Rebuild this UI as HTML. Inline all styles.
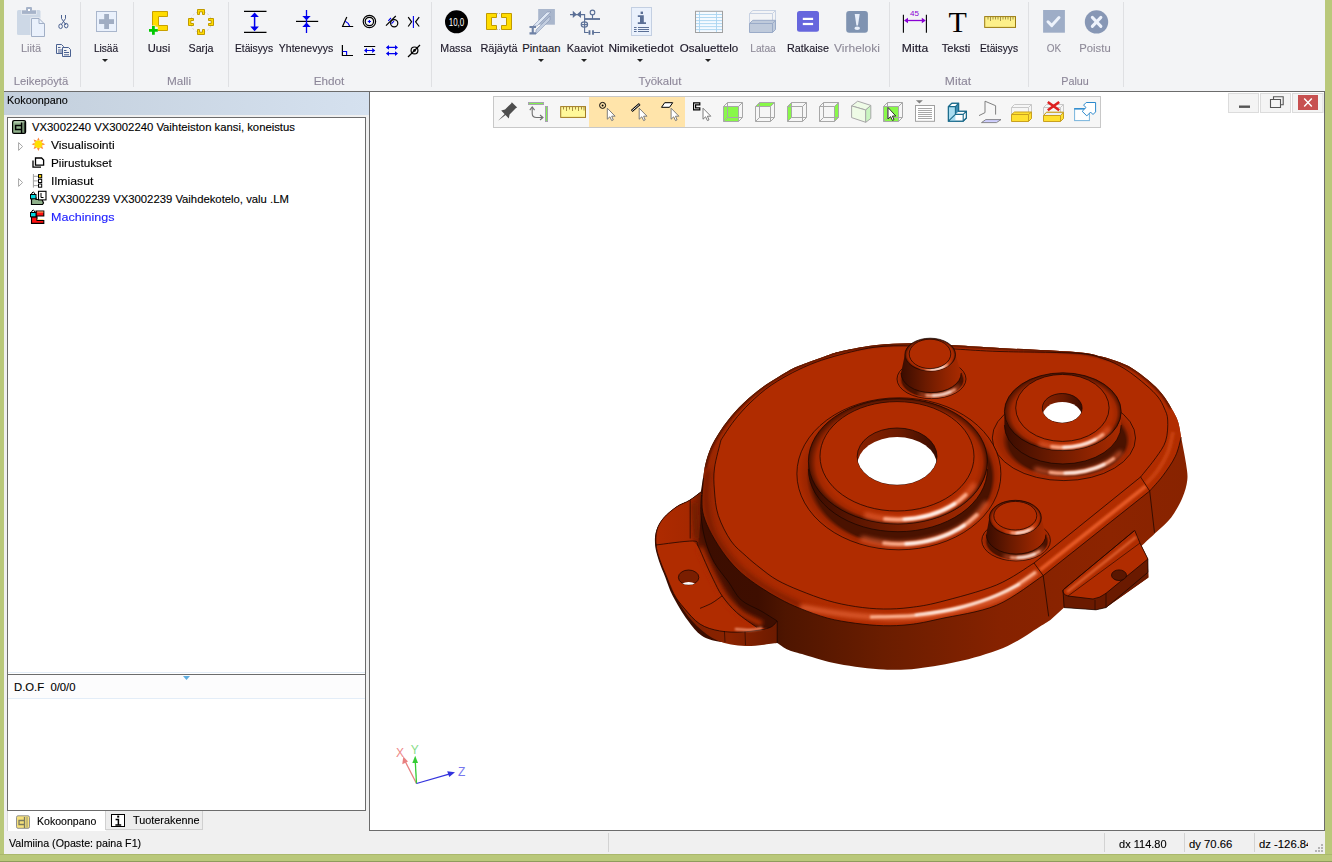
<!DOCTYPE html>
<html><head><meta charset="utf-8">
<style>
*{margin:0;padding:0;box-sizing:border-box}
html,body{width:1332px;height:862px;overflow:hidden;background:#b9c87a;font-family:"Liberation Sans",sans-serif;position:relative}
.a{position:absolute}
.lbl{position:absolute;width:100px;text-align:center;font-size:11.3px;line-height:14px;color:#1c1828;white-space:nowrap;-webkit-text-stroke:0.15px #1c1828}
.dis{color:#8e8a98;-webkit-text-stroke:0.1px #8e8a98}
.grp{position:absolute;width:100px;text-align:center;font-size:11.3px;line-height:14px;color:#8c8698;white-space:nowrap;-webkit-text-stroke:0.1px #8c8698}
.sep{position:absolute;top:2px;width:1px;height:85px;background:#dfe0e3}
.dd{position:absolute;width:0;height:0;border-left:3px solid transparent;border-right:3px solid transparent;border-top:3px solid #222}
.tr{position:absolute;font-size:11.3px;line-height:14px;color:#000;white-space:nowrap;-webkit-text-stroke:0.12px currentColor}
svg{position:absolute;overflow:visible}
</style></head><body>
<!-- ribbon -->
<div class="a" style="left:4px;top:0;width:1321px;height:91px;background:#f3f4f6"></div>
<div class="a" style="left:4px;top:91px;width:1321px;height:1px;background:#6c6c6c"></div>
<div class="sep" style="left:80px"></div>
<div class="sep" style="left:133px"></div>
<div class="sep" style="left:228px"></div>
<div class="sep" style="left:431px"></div>
<div class="sep" style="left:889px"></div>
<div class="sep" style="left:1028px"></div>
<div class="sep" style="left:1123px"></div>

<!-- labels -->
<div class="lbl dis" style="left:-19.5px;top:41px;transform:scaleX(0.974)">Liitä</div>
<div class="lbl" style="left:55.6px;top:41px;transform:scaleX(0.896)">Lisää</div>
<div class="dd" style="left:102px;top:59px"></div>
<div class="lbl" style="left:108.8px;top:41px;transform:scaleX(0.991)">Uusi</div>
<div class="lbl" style="left:150.5px;top:41px;transform:scaleX(0.944)">Sarja</div>
<div class="lbl" style="left:204.4px;top:41px;transform:scaleX(0.905)">Etäisyys</div>
<div class="lbl" style="left:256.3px;top:41px;transform:scaleX(0.929)">Yhtenevyys</div>
<div class="lbl" style="left:406px;top:41px;transform:scaleX(0.940)">Massa</div>
<div class="lbl" style="left:448.5px;top:41px;transform:scaleX(0.968)">Räjäytä</div>
<div class="lbl" style="left:491.5px;top:41px;transform:scaleX(1.000)">Pintaan</div>
<div class="dd" style="left:538px;top:59px"></div>
<div class="lbl" style="left:534.5px;top:41px;transform:scaleX(0.968)">Kaaviot</div>
<div class="dd" style="left:581px;top:59px"></div>
<div class="lbl" style="left:591.2px;top:41px;transform:scaleX(1.049)">Nimiketiedot</div>
<div class="dd" style="left:637px;top:59px"></div>
<div class="lbl" style="left:659.1px;top:41px;transform:scaleX(1.024)">Osaluettelo</div>
<div class="dd" style="left:705px;top:59px"></div>
<div class="lbl dis" style="left:712.7px;top:41px;transform:scaleX(0.906)">Lataa</div>
<div class="lbl" style="left:757.5px;top:41px;transform:scaleX(0.955)">Ratkaise</div>
<div class="lbl dis" style="left:806.7px;top:41px;transform:scaleX(1.064)">Virheloki</div>
<div class="lbl" style="left:864.7px;top:41px;transform:scaleX(1.074)">Mitta</div>
<div class="lbl" style="left:906.2px;top:41px;transform:scaleX(0.986)">Teksti</div>
<div class="lbl" style="left:949.3px;top:41px;transform:scaleX(0.905)">Etäisyys</div>
<div class="lbl dis" style="left:1004px;top:41px;transform:scaleX(0.883)">OK</div>
<div class="lbl dis" style="left:1045.3px;top:41px;transform:scaleX(0.997)">Poistu</div>

<div class="grp" style="left:-8.7px;top:74px;transform:scaleX(0.999)">Leikepöytä</div>
<div class="grp" style="left:129.4px;top:74px;transform:scaleX(1.042)">Malli</div>
<div class="grp" style="left:278.7px;top:74px;transform:scaleX(1.037)">Ehdot</div>
<div class="grp" style="left:609.7px;top:74px;transform:scaleX(1.017)">Työkalut</div>
<div class="grp" style="left:907.9px;top:74px;transform:scaleX(1.074)">Mitat</div>
<div class="grp" style="left:1024.7px;top:74px;transform:scaleX(0.955)">Paluu</div>

<!-- ICONS -->
<div id="icons"><svg style="left:0;top:0" width="1332" height="92" viewBox="0 0 1332 92">
<!-- Liita clipboard -->
<rect x="17" y="10" width="23.5" height="25" rx="1.5" fill="#cdd8e6"/>
<rect x="21.5" y="9.5" width="15" height="5" fill="#f3f4f6"/>
<rect x="22" y="10.3" width="14" height="3.6" fill="#a6b3c9"/>
<rect x="26" y="7" width="6" height="4" rx="1" fill="#a6b3c9"/>
<rect x="28" y="9" width="2" height="2" fill="#fff"/>
<path d="M30.5 17.5 H39.5 L45.5 23.5 V37.5 H30.5 Z" fill="#f3f4f6"/>
<path d="M31.5 18.5 H39 L44.5 24 V36.5 H31.5 Z" fill="#eaf1fc" stroke="#a1afc6" stroke-width="1"/>
<path d="M39 18.5 V23.5 H44.5" fill="none" stroke="#a1afc6" stroke-width="1"/>
<!-- scissors -->
<g fill="none" stroke="#4a6191" stroke-width="1">
<path d="M61.5 15 V18.5 L66 25 M65.5 15 V18.5 L61 25"/>
<ellipse cx="60.6" cy="26.3" rx="1.8" ry="2.3"/>
<ellipse cx="66.2" cy="25.6" rx="1.8" ry="2.3"/>
</g>
<!-- copy -->
<g fill="#f3f4f6" stroke="#4a6191" stroke-width="1">
<path d="M56.5 44.5 H61.5 L63.5 46.5 V53.5 H56.5 Z"/>
<path d="M62.5 47.5 H68.5 L70.5 49.5 V56.5 H62.5 Z"/>
<path d="M58 47.5 H60.5 M58 50 H62 M58 52 H62 M64 50.5 H66.5 M64 52.5 H69 M64 54.8 H69"/>
</g>
<!-- Lisaa -->
<rect x="96.5" y="11.5" width="20" height="20" fill="#eaf1fc" stroke="#a9b6cc" stroke-width="1"/>
<rect x="99" y="19.2" width="15" height="4.8" fill="#a0adc3"/>
<rect x="104.2" y="14" width="4.8" height="15" fill="#a0adc3"/>
<!-- Uusi -->
<path d="M152.5 11.5 H167.5 V16.5 H158.5 V25.5 H167.5 V30.5 H152.5 Z" fill="#ffdc00" stroke="#c8a000" stroke-width="1"/>
<path d="M148.5 28.9 H157.8 M153.2 25.5 V34.8" stroke="#f3f4f6" stroke-width="4.5"/>
<path d="M149 30.4 H157.8 M153.4 26 V34.8" stroke="#00c800" stroke-width="2.8"/>
<!-- Sarja -->
<circle cx="201" cy="22" r="10.5" fill="none" stroke="#c8c8c8" stroke-width="0.8" stroke-dasharray="2 2"/>
<g fill="#ffdc00" stroke="#c09a00" stroke-width="1">
<path d="M197.5 14.5 V9.5 H204.5 V14.5 H202.5 V11.8 H199.5 V14.5 Z"/>
<path d="M197.5 29.5 V34.5 H204.5 V29.5 H202.5 V32.2 H199.5 V29.5 Z"/>
<path d="M193.5 18.5 H188.5 V25.5 H193.5 V23.5 H190.8 V20.5 H193.5 Z"/>
<path d="M208.5 18.5 H213.5 V25.5 H208.5 V23.5 H211.2 V20.5 H208.5 Z"/>
</g>
<!-- Etaisyys -->
<path d="M244 11.3 H266.5 M244 32.3 H266.5" stroke="#000" stroke-width="1.2"/>
<path d="M254.6 14 V30" stroke="#0000ee" stroke-width="1.5"/>
<path d="M250.3 17 L254.6 12.4 L258.9 17 Z M250.3 26.5 L254.6 31.2 L258.9 26.5 Z" fill="#0000ee"/>
<!-- Yhtenevyys -->
<path d="M296 21.4 H318.2" stroke="#000" stroke-width="1.2"/>
<path d="M306.5 10 V33" stroke="#0000ee" stroke-width="1.3"/>
<path d="M302.3 16 L306.5 20.2 L310.7 16 Z M302.3 27 L306.5 22.6 L310.7 27 Z" fill="#0000ee"/>
<!-- small icons row1 -->
<g fill="none" stroke="#000" stroke-width="1.2">
<path d="M341.9 26.5 H353.2 M342.5 26.5 L346.8 17"/>
<circle cx="369.4" cy="21.5" r="6.2"/>
<circle cx="369.4" cy="21.5" r="4.2"/>
<circle cx="394.2" cy="23.3" r="3.6"/>
<path d="M386 25.6 L395.8 16"/>
<path d="M408.2 17.2 L411.6 21.8 L408.2 26.5 M419.2 17.2 L415.6 21.8 L419.2 26.5"/>
</g>
<g fill="none" stroke="#0000ee" stroke-width="1.1">
<path d="M345.2 21.2 Q348.6 22.8 349.6 26"/>
<path d="M388.3 20.8 L391 18 M391.5 23.7 L394 21.2"/>
<path d="M413.4 16 V28"/>
<path d="M367.8 21.5 H371 M369.4 19.9 V23.1"/>
</g>
<!-- row2 -->
<g fill="none" stroke="#000" stroke-width="1.2">
<path d="M342.4 45 V55.5 H353"/>
<path d="M364 46.5 H375.2 M364 54.5 H375.2"/>
<path d="M408 57 L420 45"/>
<circle cx="414.5" cy="50.4" r="3.4"/>
</g>
<circle cx="414.5" cy="50.4" r="1.3" fill="#000"/>
<g fill="none" stroke="#0000ee" stroke-width="1.1">
<path d="M342.6 51.5 H346.6 V55"/>
<path d="M365 50.5 H374.5 M387 47.4 H397 M387 53.6 H397"/>
</g>
<g fill="#0000ee">
<path d="M364 50.5 L367 48 V53 Z M375.2 50.5 L372.2 48 V53 Z"/>
<path d="M385.9 47.4 L389 45 V49.8 Z M398 47.4 L395 45 V49.8 Z M385.9 53.6 L389 51.2 V56 Z M398 53.6 L395 51.2 V56 Z"/>
</g>
<!-- Massa -->
<circle cx="456.5" cy="21.8" r="11.5" fill="#000"/>
<text x="456.5" y="26" text-anchor="middle" font-family="Liberation Sans" font-size="11" fill="#fff" textLength="15.5" lengthAdjust="spacingAndGlyphs">10,0</text>
<!-- Rajayta -->
<g fill="#ffdc00" stroke="#c09a00" stroke-width="1">
<path d="M486.5 13.5 H496.5 V17.5 H491.5 V25.5 H496.5 V29.5 H486.5 Z"/>
<path d="M511.5 13.5 H501.5 V17.5 H506.5 V25.5 H501.5 V29.5 H511.5 Z"/>
</g>
<path d="M497 13.5 H501 M497 29.5 H501" stroke="#b0b0b0" stroke-width="0.8" stroke-dasharray="1 1"/>
<!-- Pintaan -->
<rect x="538.2" y="9" width="16.7" height="15.7" fill="#a9b6cc"/>
<path d="M533 26 L547 12 L551 12 L537 26 Z" fill="#dde6f3" stroke="#8796b4" stroke-width="0.6"/>
<path d="M536 30 L550 16 V20 L536 34 Z" fill="#c3cee0" stroke="#8796b4" stroke-width="0.6"/>
<path d="M529.5 26 H536 V28 H533.8 V32.3 H536 V34.6 H529.5 V32.3 H531.7 V28 H529.5 Z" fill="#6f82a6"/>
<!-- Kaaviot -->
<g fill="none" stroke="#5a6f96" stroke-width="1.1">
<path d="M570 14.6 H584.6 V32.5 H588.6 M593.4 32.5 H600"/>
<circle cx="592.5" cy="12.4" r="2.3"/>
<path d="M592.5 14.7 V19"/>
<ellipse cx="584.4" cy="24.6" rx="3.2" ry="2.7"/>
<path d="M581.5 24.6 H587.3"/>
</g>
<path d="M584.6 19 H600" stroke="#5a6f96" stroke-width="1.8"/>
<path d="M589.5 30.2 V34.8 M593 30.2 V34.8" stroke="#5a6f96" stroke-width="1.8"/>
<path d="M572.8 10.8 L576.8 14.6 L572.8 18 Z M581 10.8 L576.8 14.6 L581 18 Z" fill="#5a6f96"/>
<!-- Nimiketiedot -->
<rect x="631.5" y="7.5" width="20" height="28" fill="#eaf1fc" stroke="#c3cfe2" stroke-width="1"/>
<g fill="#5a6f96">
<rect x="640.6" y="11.6" width="2.4" height="2.4"/>
<path d="M637.8 15.3 H643.8 V22.2 H646 V24 H637.8 V22.2 H640 V17 H637.8 Z"/>
<rect x="634" y="27" width="2.6" height="1" /><rect x="638" y="27" width="11" height="1"/>
<rect x="634" y="29" width="2.6" height="1" /><rect x="638" y="29" width="11" height="1"/>
<rect x="634" y="31" width="2.6" height="1" /><rect x="638" y="31" width="11" height="1"/>
</g>
<!-- Osaluettelo -->
<rect x="695.5" y="11.3" width="27" height="21.2" fill="#f5faff" stroke="#a0a0a0" stroke-width="1"/>
<g stroke="#a8d4f0" stroke-width="0.9">
<path d="M696 14.5 H722 M696 17.5 H722 M696 20.6 H722 M696 23.6 H722 M696 26.6 H722 M696 29.6 H722"/>
<path d="M699.5 12 V32 M716.5 12 V32"/>
</g>
<!-- Lataa -->
<g fill="none" stroke="#c8d2e3" stroke-width="1">
<path d="M749.5 23.5 V13.5 L752.8 10.5 H775.5 V23 M749.5 13.5 H772.5 V23 M772.5 13.5 L775.5 10.5"/>
</g>
<path d="M749.5 23.5 L752.8 20.3 H775.5 V29.5 L772.5 32.5 H749.5 Z" fill="#bfcadb" stroke="#9aabc8" stroke-width="1"/>
<path d="M749.5 23.5 H772.5 V32.5 M772.5 23.5 L775.5 20.3" fill="none" stroke="#9aabc8" stroke-width="1"/>
<!-- Ratkaise -->
<rect x="797" y="11" width="22" height="20.8" rx="2.5" fill="#6666dd"/>
<rect x="802.8" y="17.8" width="10.3" height="2.2" fill="#fff"/>
<rect x="802.8" y="22.9" width="10.3" height="2.2" fill="#fff"/>
<!-- Virheloki -->
<rect x="846.2" y="11" width="21.7" height="21.8" rx="3" fill="#7f93b1"/>
<path d="M854.7 14 H859.7 L858 25.5 H856.4 Z" fill="#e8effa"/>
<ellipse cx="857.2" cy="28.3" rx="2.8" ry="1.7" fill="#e8effa"/>
<!-- Mitta -->
<path d="M903.4 14.8 V32.8 M926.4 14.8 V32.8" stroke="#000" stroke-width="1.1"/>
<path d="M906 20.5 H924" stroke="#8a00d4" stroke-width="1.3"/>
<path d="M904 20.5 L908 17.8 V23.2 Z M925.8 20.5 L921.8 17.8 V23.2 Z" fill="#8a00d4"/>
<text x="914.5" y="15.9" text-anchor="middle" font-family="Liberation Sans" font-size="8" fill="#8a00d4">45</text>
<!-- Teksti -->
<text x="957.6" y="32.4" text-anchor="middle" font-family="Liberation Serif" font-size="30" fill="#000">T</text>
<!-- ruler -->
<rect x="984.7" y="16.6" width="30.8" height="10.8" fill="#fdf08a" stroke="#9a7a10" stroke-width="1"/>
<path d="M988 17 V19.5 M990.5 17 V21 M993 17 V19.5 M995.5 17 V19.5 M998 17 V19.5 M1000.5 17 V21 M1003 17 V19.5 M1005.5 17 V19.5 M1008 17 V19.5 M1010.5 17 V21 M1013 17 V19.5" stroke="#6a5a20" stroke-width="0.6"/>
<!-- OK -->
<rect x="1043.1" y="10" width="21.8" height="22.7" fill="#9eadc7"/>
<path d="M1048 21.8 L1051.8 25.6 L1059 17.5" fill="none" stroke="#eef3fc" stroke-width="3" stroke-linecap="round" stroke-linejoin="round"/>
<!-- Poistu -->
<circle cx="1096.5" cy="21.9" r="11.7" fill="#8797b5"/>
<path d="M1092.3 17.4 L1100.9 26.4 M1100.9 17.4 L1092.3 26.4" stroke="#eef3fc" stroke-width="3" stroke-linecap="round"/>
</svg>
</div>

<!-- left panel -->
<div class="a" style="left:4px;top:92px;width:365px;height:739px;background:#f0f0f0"></div>
<div class="a" style="left:4px;top:92px;width:365px;height:23px;background:linear-gradient(90deg,#c3cfdc,#d5e1ef)"></div>
<div class="tr" style="left:7px;top:93px;font-size:11.5px;transform:scaleX(0.94);transform-origin:0 0">Kokoonpano</div>
<div class="a" style="left:7px;top:117px;width:359px;height:694px;background:#fff;border:1px solid #6c6c6c"></div>
<div class="a" style="left:8px;top:672px;width:357px;height:1px;background:#e3edf8"></div>
<div class="a" style="left:8px;top:674px;width:357px;height:1px;background:#6c6c6c"></div>
<div class="a" style="left:8px;top:675px;width:357px;height:23px;background:#fcfcfd"></div>
<div class="a" style="left:8px;top:698px;width:357px;height:1px;background:#e3edf8"></div>
<div class="tr" style="left:14px;top:680px">D.O.F&nbsp; 0/0/0</div>

<div class="tr" style="left:32px;top:120px">VX3002240 VX3002240 Vaihteiston kansi, koneistus</div>
<div class="tr" style="left:51px;top:138px;transform:scaleX(1.07);transform-origin:0 0">Visualisointi</div>
<div class="tr" style="left:51px;top:156px;transform:scaleX(1.04);transform-origin:0 0">Piirustukset</div>
<div class="tr" style="left:51px;top:174px;transform:scaleX(1.09);transform-origin:0 0">Ilmiasut</div>
<div class="tr" style="left:51px;top:192px">VX3002239 VX3002239 Vaihdekotelo, valu .LM</div>
<div class="tr" style="left:51px;top:210px;color:#2020ff;transform:scaleX(1.11);transform-origin:0 0">Machinings</div>

<!-- tabs -->
<div class="a" style="left:7px;top:811px;width:99px;height:20px;background:#fff;border-left:1px solid #d9d9d9"></div>
<div class="a" style="left:105px;top:811px;width:98px;height:19px;background:#ededed;border:1px solid #d0d0d0;border-top:none"></div>
<div class="tr" style="left:37px;top:814px;transform:scaleX(0.935);transform-origin:0 0">Kokoonpano</div>
<div class="tr" style="left:133px;top:813px;transform:scaleX(0.96);transform-origin:0 0">Tuoterakenne</div>

<!-- viewport -->
<div class="a" style="left:369px;top:92px;width:956px;height:739px;background:#fff;border:1px solid #6c6c6c;border-top:none"></div>

<svg style="left:0;top:0" width="1332" height="862" viewBox="0 0 1332 862">
<defs>
<linearGradient id="wall" x1="650" y1="0" x2="1190" y2="0" gradientUnits="userSpaceOnUse">
<stop offset="0" stop-color="#3a0c00"/><stop offset="0.2" stop-color="#3e0e00"/><stop offset="0.25" stop-color="#4e1500"/><stop offset="0.43" stop-color="#6a1d00"/><stop offset="0.65" stop-color="#862200"/><stop offset="0.85" stop-color="#8c2400"/><stop offset="1" stop-color="#882300"/>
</linearGradient>
<linearGradient id="fil" x1="700" y1="0" x2="1190" y2="0" gradientUnits="userSpaceOnUse">
<stop offset="0" stop-color="#962500"/><stop offset="0.08" stop-color="#a82a00"/><stop offset="0.3" stop-color="#b02c00"/><stop offset="1" stop-color="#b22d00"/>
</linearGradient>
<linearGradient id="cyl" x1="0" y1="0" x2="1" y2="0">
<stop offset="0" stop-color="#3a0c00"/><stop offset="0.4" stop-color="#6a1a00"/><stop offset="0.75" stop-color="#902400"/><stop offset="1" stop-color="#a82a00"/>
</linearGradient>
<linearGradient id="hw" x1="0" y1="0" x2="1" y2="0">
<stop offset="0" stop-color="#8a2200"/><stop offset="0.55" stop-color="#6a1a00"/><stop offset="1" stop-color="#3a0c00"/>
</linearGradient>
<radialGradient id="ring" cx="0.62" cy="0.85" r="0.6">
<stop offset="0" stop-color="#ffe6d8"/><stop offset="0.18" stop-color="#f07040"/><stop offset="0.45" stop-color="#c03400"/><stop offset="1" stop-color="#ad2a00"/>
</radialGradient>
<filter id="bl" filterUnits="userSpaceOnUse" x="600" y="300" width="650" height="420"><feGaussianBlur stdDeviation="1.3"/></filter>
<filter id="bl3" filterUnits="userSpaceOnUse" x="600" y="300" width="650" height="420"><feGaussianBlur stdDeviation="2"/></filter>
<filter id="bl2" filterUnits="userSpaceOnUse" x="600" y="300" width="650" height="420"><feGaussianBlur stdDeviation="2.5"/></filter>
</defs>
<path d="M704.6 468.0 C705.2 465.8 706.5 459.4 708.1 454.8 C709.7 450.2 711.2 446.0 714.4 440.4 C717.6 434.8 722.5 427.2 727.4 421.0 C732.3 414.8 737.6 408.8 743.6 403.1 C749.6 397.4 755.8 392.1 763.1 386.8 C770.4 381.5 780.7 375.2 787.5 371.4 C794.3 367.6 796.6 366.9 803.7 364.1 C810.8 361.3 822.8 356.8 830.0 354.4 C837.2 352.0 839.2 351.6 847.0 350.0 C854.8 348.4 865.8 346.1 876.8 345.0 C887.8 343.9 900.2 343.1 913.2 343.2 C926.2 343.2 940.6 344.5 955.1 345.3 C969.6 346.1 980.0 346.9 1000.0 348.0 C1020.0 349.1 1058.6 350.6 1075.3 352.0 C1092.0 353.4 1093.2 354.7 1100.0 356.2 C1106.8 357.7 1110.8 359.1 1116.2 361.1 C1121.6 363.1 1127.1 365.1 1132.5 368.4 C1137.9 371.6 1143.8 376.4 1148.7 380.6 C1153.6 384.8 1157.9 389.0 1161.7 393.6 C1165.5 398.2 1168.7 403.6 1171.4 408.2 C1174.1 412.8 1176.3 416.3 1177.9 421.2 C1179.5 426.1 1179.9 430.4 1181.2 437.4 C1182.5 444.4 1185.0 456.3 1186.0 463.4 C1187.0 470.5 1187.9 474.2 1187.3 480.0 C1186.7 485.8 1185.0 491.7 1182.3 497.9 C1179.6 504.1 1175.4 511.8 1171.2 517.4 C1167.0 523.0 1162.2 526.6 1157.3 531.3 C1152.4 536.0 1144.2 543.4 1141.6 545.8 L1147.6 558.6 L1148.4 577.4 L1106.0 607.6 L1096.0 609.8 L1064.1 607.6 L1050.4 620.0 C1048.9 620.9 1048.6 621.3 1041.5 625.6 C1034.4 629.9 1020.8 640.1 1007.7 645.9 C994.6 651.7 977.7 656.8 962.7 660.5 C947.7 664.2 930.8 666.9 917.7 668.4 C904.6 669.9 897.0 670.2 883.9 669.5 C870.8 668.8 851.9 666.3 838.8 663.9 C825.6 661.5 813.4 657.2 805.0 654.9 C796.6 652.6 793.3 652.0 788.6 650.0 C783.9 648.0 778.8 643.9 776.8 642.7 L745.2 643.7 C771.5 642.9 754.7 643.9 745.2 643.7 C735.7 643.5 726.8 643.0 719.6 641.7 C712.4 640.4 707.1 639.4 701.8 635.8 C696.4 632.2 692.3 626.6 687.5 620.0 C682.7 613.4 676.5 603.0 672.8 595.9 C669.1 588.8 667.7 583.3 665.4 577.4 C663.1 571.5 660.6 566.0 658.9 560.7 C657.2 555.4 655.7 550.8 655.2 545.8 C654.7 540.8 654.7 535.6 656.1 531.0 C657.5 526.4 660.2 522.0 663.6 518.0 C667.0 514.0 672.3 509.8 676.6 506.8 C680.9 503.9 685.5 502.8 689.5 500.3 C693.5 497.8 698.9 493.4 700.8 492.0 Z" fill="url(#wall)"/>
<path d="M703.5 478.0 C703.7 476.3 703.8 471.9 704.6 468.0 C705.4 464.1 706.5 459.4 708.1 454.8 C709.7 450.2 711.2 446.0 714.4 440.4 C717.6 434.8 722.5 427.2 727.4 421.0 C732.3 414.8 737.6 408.8 743.6 403.1 C749.6 397.4 755.8 392.1 763.1 386.8 C770.4 381.5 780.7 375.2 787.5 371.4 C794.3 367.6 796.6 366.9 803.7 364.1 C810.8 361.3 822.8 356.8 830.0 354.4 C837.2 352.0 839.2 351.6 847.0 350.0 C854.8 348.4 865.8 346.1 876.8 345.0 C887.8 343.9 900.2 343.1 913.2 343.2 C926.2 343.2 940.6 344.5 955.1 345.3 C969.6 346.1 980.0 346.9 1000.0 348.0 C1020.0 349.1 1058.6 350.6 1075.3 352.0 C1092.0 353.4 1093.2 354.7 1100.0 356.2 C1106.8 357.7 1110.8 359.1 1116.2 361.1 C1121.6 363.1 1127.1 365.1 1132.5 368.4 C1137.9 371.6 1143.8 376.4 1148.7 380.6 C1153.6 384.8 1157.9 389.0 1161.7 393.6 C1165.5 398.2 1168.7 403.6 1171.4 408.2 C1174.1 412.8 1176.3 416.3 1177.9 421.2 C1179.5 426.1 1180.7 434.7 1181.2 437.4 C1180.2 440.5 1178.5 449.8 1175.4 456.2 C1172.4 462.6 1167.2 469.9 1162.9 475.7 C1158.6 481.5 1151.9 488.4 1149.7 491.0 L1043.2 575.6 C1035.4 580.5 1013.7 598.1 996.5 605.3 C979.3 612.5 954.6 615.6 940.2 618.8 C925.8 622.0 919.5 623.4 910.0 624.5 C900.5 625.6 892.5 625.9 883.5 625.7 C874.5 625.5 865.0 624.5 855.7 623.3 C846.4 622.0 837.1 620.7 827.8 618.2 C818.5 615.7 808.0 611.6 800.0 608.4 C792.0 605.2 786.7 602.6 780.0 599.0 C773.3 595.4 766.5 591.4 760.0 587.0 C753.5 582.6 746.9 578.0 741.2 572.9 C735.5 567.8 730.8 562.7 725.9 556.3 C721.0 549.9 715.6 541.5 711.9 534.7 C708.2 527.9 705.2 521.3 703.6 515.5 C702.0 509.7 702.0 506.2 702.0 500.0 C702.0 493.8 703.2 481.7 703.5 478.0 Z" fill="url(#fil)"/>
<clipPath id="clipU"><path d="M703.5 478.0 C703.7 476.3 703.8 471.9 704.6 468.0 C705.4 464.1 706.5 459.4 708.1 454.8 C709.7 450.2 711.2 446.0 714.4 440.4 C717.6 434.8 722.5 427.2 727.4 421.0 C732.3 414.8 737.6 408.8 743.6 403.1 C749.6 397.4 755.8 392.1 763.1 386.8 C770.4 381.5 780.7 375.2 787.5 371.4 C794.3 367.6 796.6 366.9 803.7 364.1 C810.8 361.3 822.8 356.8 830.0 354.4 C837.2 352.0 839.2 351.6 847.0 350.0 C854.8 348.4 865.8 346.1 876.8 345.0 C887.8 343.9 900.2 343.1 913.2 343.2 C926.2 343.2 940.6 344.5 955.1 345.3 C969.6 346.1 980.0 346.9 1000.0 348.0 C1020.0 349.1 1058.6 350.6 1075.3 352.0 C1092.0 353.4 1093.2 354.7 1100.0 356.2 C1106.8 357.7 1110.8 359.1 1116.2 361.1 C1121.6 363.1 1127.1 365.1 1132.5 368.4 C1137.9 371.6 1143.8 376.4 1148.7 380.6 C1153.6 384.8 1157.9 389.0 1161.7 393.6 C1165.5 398.2 1168.7 403.6 1171.4 408.2 C1174.1 412.8 1176.3 416.3 1177.9 421.2 C1179.5 426.1 1180.7 434.7 1181.2 437.4 C1180.2 440.5 1178.5 449.8 1175.4 456.2 C1172.4 462.6 1167.2 469.9 1162.9 475.7 C1158.6 481.5 1151.9 488.4 1149.7 491.0 L1043.2 575.6 C1035.4 580.5 1013.7 598.1 996.5 605.3 C979.3 612.5 954.6 615.6 940.2 618.8 C925.8 622.0 919.5 623.4 910.0 624.5 C900.5 625.6 892.5 625.9 883.5 625.7 C874.5 625.5 865.0 624.5 855.7 623.3 C846.4 622.0 837.1 620.7 827.8 618.2 C818.5 615.7 808.0 611.6 800.0 608.4 C792.0 605.2 786.7 602.6 780.0 599.0 C773.3 595.4 766.5 591.4 760.0 587.0 C753.5 582.6 746.9 578.0 741.2 572.9 C735.5 567.8 730.8 562.7 725.9 556.3 C721.0 549.9 715.6 541.5 711.9 534.7 C708.2 527.9 705.2 521.3 703.6 515.5 C702.0 509.7 702.0 506.2 702.0 500.0 C702.0 493.8 703.2 481.7 703.5 478.0 Z"/></clipPath>
<path d="M721.0 440.0 C723.1 436.8 729.1 427.2 733.9 421.0 C738.7 414.8 743.8 409.0 750.0 403.0 C756.2 397.0 762.9 390.9 771.2 385.2 C779.5 379.5 790.2 373.6 800.0 369.0 C809.8 364.4 817.7 361.2 830.0 357.6 C842.3 354.0 860.2 349.2 874.0 347.3 C887.8 345.4 899.5 345.7 913.0 346.0 C926.5 346.3 940.5 348.1 955.0 349.0 C969.5 349.9 979.5 350.8 1000.0 351.5 C1020.5 352.2 1060.4 352.1 1077.7 353.3 C1095.0 354.6 1096.1 356.4 1104.0 359.0 C1111.9 361.6 1118.0 364.7 1125.0 369.0 C1132.0 373.3 1140.4 380.3 1145.9 385.0 C1151.4 389.7 1155.0 393.2 1158.0 397.0 C1161.0 400.8 1162.6 404.2 1164.2 408.0 C1165.8 411.8 1167.5 414.5 1167.7 420.0 C1168.0 425.5 1167.7 434.6 1165.7 440.9 C1163.7 447.2 1160.1 451.6 1155.9 457.6 C1151.7 463.6 1143.1 473.8 1140.6 477.0 L1034.0 563.0 C1027.8 566.7 1012.1 578.5 996.5 585.0 C980.9 591.5 954.6 598.1 940.2 601.9 C925.8 605.6 919.5 606.3 910.0 607.5 C900.5 608.7 892.5 609.1 883.5 609.0 C874.5 608.9 865.0 608.0 855.7 606.6 C846.4 605.2 837.1 603.3 827.8 600.6 C818.5 597.9 808.5 594.0 800.0 590.6 C791.5 587.2 783.7 583.8 777.0 580.0 C770.3 576.2 765.1 571.8 760.0 567.8 C754.9 563.8 751.1 560.8 746.3 556.3 C741.5 551.8 735.7 547.8 731.0 541.0 C726.3 534.2 721.1 524.0 718.3 515.5 C715.5 507.0 715.0 497.9 714.4 490.0 C713.8 482.1 713.4 476.3 714.5 468.0 C715.6 459.7 719.9 444.7 721.0 440.0 Z" fill="#b02c00"/>
<g clip-path="url(#clipU)">
<path d="M800.0 607.0 C808.3 608.3 833.3 613.2 850.0 615.0 C866.7 616.8 883.3 618.5 900.0 618.0 C916.7 617.5 933.3 615.3 950.0 612.0 C966.7 608.7 985.3 604.7 1000.0 598.0 C1014.7 591.3 1031.7 576.3 1038.0 572.0" fill="none" stroke="#e8683a" stroke-width="5" filter="url(#bl3)" opacity="0.8"/>
<path d="M870.0 617.0 C878.3 616.7 904.2 616.8 920.0 615.0 C935.8 613.2 950.8 609.8 965.0 606.0 C979.2 602.2 993.2 597.7 1005.0 592.0 C1016.8 586.3 1030.8 575.3 1036.0 572.0" fill="none" stroke="#ffb898" stroke-width="3" filter="url(#bl)"/>
<path d="M915.0 615.0 C921.7 614.0 942.5 611.8 955.0 609.0 C967.5 606.2 979.2 602.2 990.0 598.0 C1000.8 593.8 1015.0 586.3 1020.0 584.0" fill="none" stroke="#ffffff" stroke-width="1.8" filter="url(#bl)"/>
<path d="M1040 570 L1146 486" fill="none" stroke="#e65a28" stroke-width="4" filter="url(#bl)"/>
<path d="M1146.0 484.0 C1148.0 481.7 1154.3 475.3 1158.0 470.0 C1161.7 464.7 1165.5 458.3 1168.0 452.0 C1170.5 445.7 1172.2 435.3 1173.0 432.0" fill="none" stroke="#c84010" stroke-width="4" filter="url(#bl)"/>
<path d="M708.0 470.0 C707.7 475.0 705.3 490.0 706.0 500.0 C706.7 510.0 708.7 521.2 712.0 530.0 C715.3 538.8 720.0 545.5 726.0 553.0 C732.0 560.5 739.8 568.3 748.0 575.0 C756.2 581.7 766.3 588.0 775.0 593.0 C783.7 598.0 795.8 603.0 800.0 605.0" fill="none" stroke="#5a1600" stroke-width="5" filter="url(#bl2)" opacity="0.55"/>
<path d="M704.6 468.0 C705.2 465.8 706.5 459.4 708.1 454.8 C709.7 450.2 711.2 446.0 714.4 440.4 C717.6 434.8 722.5 427.2 727.4 421.0 C732.3 414.8 737.6 408.8 743.6 403.1 C749.6 397.4 755.8 392.1 763.1 386.8 C770.4 381.5 780.7 375.2 787.5 371.4 C794.3 367.6 796.6 366.9 803.7 364.1 C810.8 361.3 822.8 356.8 830.0 354.4 C837.2 352.0 839.2 351.6 847.0 350.0 C854.8 348.4 865.8 346.1 876.8 345.0 C887.8 343.9 900.2 343.1 913.2 343.2 C926.2 343.2 940.6 344.5 955.1 345.3 C969.6 346.1 980.0 346.9 1000.0 348.0 C1020.0 349.1 1058.6 350.6 1075.3 352.0 C1092.0 353.4 1093.2 354.7 1100.0 356.2 C1106.8 357.7 1110.8 359.1 1116.2 361.1 C1121.6 363.1 1127.1 365.1 1132.5 368.4 C1137.9 371.6 1143.8 376.4 1148.7 380.6 C1153.6 384.8 1157.9 389.0 1161.7 393.6 C1165.5 398.2 1169.8 405.8 1171.4 408.2" fill="none" stroke="#3a0c00" stroke-width="3" filter="url(#bl)" opacity="0.85"/>
</g>
<path d="M721.0 440.0 C723.1 436.8 729.1 427.2 733.9 421.0 C738.7 414.8 743.8 409.0 750.0 403.0 C756.2 397.0 762.9 390.9 771.2 385.2 C779.5 379.5 790.2 373.6 800.0 369.0 C809.8 364.4 817.7 361.2 830.0 357.6 C842.3 354.0 860.2 349.2 874.0 347.3 C887.8 345.4 899.5 345.7 913.0 346.0 C926.5 346.3 940.5 348.1 955.0 349.0 C969.5 349.9 979.5 350.8 1000.0 351.5 C1020.5 352.2 1060.4 352.1 1077.7 353.3 C1095.0 354.6 1096.1 356.4 1104.0 359.0 C1111.9 361.6 1118.0 364.7 1125.0 369.0 C1132.0 373.3 1140.4 380.3 1145.9 385.0 C1151.4 389.7 1155.0 393.2 1158.0 397.0 C1161.0 400.8 1162.6 404.2 1164.2 408.0 C1165.8 411.8 1167.5 414.5 1167.7 420.0 C1168.0 425.5 1167.7 434.6 1165.7 440.9 C1163.7 447.2 1160.1 451.6 1155.9 457.6 C1151.7 463.6 1143.1 473.8 1140.6 477.0 L1034.0 563.0 C1027.8 566.7 1012.1 578.5 996.5 585.0 C980.9 591.5 954.6 598.1 940.2 601.9 C925.8 605.6 919.5 606.3 910.0 607.5 C900.5 608.7 892.5 609.1 883.5 609.0 C874.5 608.9 865.0 608.0 855.7 606.6 C846.4 605.2 837.1 603.3 827.8 600.6 C818.5 597.9 808.5 594.0 800.0 590.6 C791.5 587.2 783.7 583.8 777.0 580.0 C770.3 576.2 765.1 571.8 760.0 567.8 C754.9 563.8 751.1 560.8 746.3 556.3 C741.5 551.8 735.7 547.8 731.0 541.0 C726.3 534.2 721.1 524.0 718.3 515.5 C715.5 507.0 715.0 497.9 714.4 490.0 C713.8 482.1 713.4 476.3 714.5 468.0 C715.6 459.7 719.9 444.7 721.0 440.0 Z" fill="none" stroke="#1a0500" stroke-width="0.75"/>
<path d="M703.5 478.0 C703.2 481.7 702.0 493.8 702.0 500.0 C702.0 506.2 702.0 509.7 703.6 515.5 C705.2 521.3 708.2 527.9 711.9 534.7 C715.6 541.5 721.0 549.9 725.9 556.3 C730.8 562.7 735.5 567.8 741.2 572.9 C746.9 578.0 753.5 582.6 760.0 587.0 C766.5 591.4 773.3 595.4 780.0 599.0 C786.7 602.6 792.0 605.2 800.0 608.4 C808.0 611.6 818.5 615.7 827.8 618.2 C837.1 620.7 846.4 622.0 855.7 623.3 C865.0 624.5 874.5 625.5 883.5 625.7 C892.5 625.9 900.5 625.6 910.0 624.5 C919.5 623.4 925.8 622.0 940.2 618.8 C954.6 615.6 979.3 612.5 996.5 605.3 C1013.7 598.1 1035.4 580.5 1043.2 575.6 L1149.7 491.0 C1151.9 488.4 1158.6 481.5 1162.9 475.7 C1167.2 469.9 1172.4 462.6 1175.4 456.2 C1178.5 449.8 1180.2 440.5 1181.2 437.4" fill="none" stroke="#1a0500" stroke-width="0.75"/>
<path d="M1140.6 477 L1149.7 491 L1154.5 532.7" fill="none" stroke="#1a0500" stroke-width="0.75"/>
<path d="M1034 563 L1043.2 575.6 L1048.7 616.4" fill="none" stroke="#1a0500" stroke-width="0.75"/>
<linearGradient id="cfl" x1="700" y1="600" x2="730" y2="585" gradientUnits="userSpaceOnUse"><stop offset="0" stop-color="#ad2a00"/><stop offset="1" stop-color="#3e0e00"/></linearGradient>
<path d="M700.8 492.0 C698.9 493.4 693.5 497.8 689.5 500.3 C685.5 502.8 680.9 503.9 676.6 506.8 C672.3 509.8 666.9 514.1 663.6 518.0 C660.3 521.9 658.3 525.5 657.0 530.0 C655.7 534.5 655.6 540.2 656.0 545.0 C656.4 549.8 657.8 553.9 659.5 559.0 C661.2 564.1 663.7 569.8 666.0 575.5 C668.3 581.2 670.5 588.1 673.5 593.5 C676.5 598.9 679.6 602.9 684.0 608.0 C688.4 613.1 694.0 620.2 699.9 624.0 C705.8 627.8 712.4 629.6 719.6 630.9 C726.8 632.2 735.1 632.4 743.3 631.9 C751.5 631.4 763.2 629.7 768.9 627.9 C774.5 626.1 775.8 622.1 777.2 621.0 L777.2 621.0 C774.5 619.3 766.9 614.4 760.9 610.9 C754.9 607.4 746.6 604.8 741.2 600.0 C735.8 595.2 733.0 588.1 728.5 581.9 C724.0 575.7 718.2 569.5 714.4 562.7 C710.6 555.9 707.7 548.9 705.5 541.0 C703.3 533.1 701.7 523.2 701.0 515.5 C700.3 507.8 701.4 498.4 701.5 495.0 Z" fill="url(#cfl)"/>
<path d="M700.8 492.0 C698.9 493.4 693.5 497.8 689.5 500.3 C685.5 502.8 680.9 503.9 676.6 506.8 C672.3 509.8 666.9 514.1 663.6 518.0 C660.3 521.9 658.3 525.5 657.0 530.0 C655.7 534.5 655.6 540.2 656.0 545.0 C656.4 549.8 657.8 553.9 659.5 559.0 C661.2 564.1 663.7 569.8 666.0 575.5 C668.3 581.2 670.5 588.1 673.5 593.5 C676.5 598.9 679.6 602.9 684.0 608.0 C688.4 613.1 694.0 620.2 699.9 624.0 C705.8 627.8 712.4 629.6 719.6 630.9 C726.8 632.2 735.1 632.4 743.3 631.9 C751.5 631.4 764.6 628.6 768.9 627.9 L756.9 627.5 C753.5 625.0 742.4 617.8 736.6 612.5 C730.8 607.2 726.0 601.4 722.1 595.9 C718.2 590.4 716.0 584.8 713.2 579.3 C710.4 573.8 708.0 568.2 705.5 562.7 C703.0 557.2 700.1 549.6 698.0 546.0 C695.9 542.4 699.8 541.2 692.8 541.0 C685.8 540.8 662.1 544.3 656.0 545.0 Z" fill="#b02c00"/>
<linearGradient id="lip" x1="660" y1="0" x2="702" y2="0" gradientUnits="userSpaceOnUse"><stop offset="0" stop-color="#ad2a00"/><stop offset="0.7" stop-color="#a52800"/><stop offset="1" stop-color="#6a1a00"/></linearGradient>
<path d="M700.8 492.0 C698.9 493.4 693.5 497.8 689.5 500.3 C685.5 502.8 680.9 503.9 676.6 506.8 C672.3 509.8 666.9 514.1 663.6 518.0 C660.3 521.9 658.3 525.5 657.0 530.0 C655.7 534.5 656.2 542.5 656.0 545.0 L692.8 541.0 L698.0 546.0 L701.0 515.5 L701.5 495.0 Z" fill="url(#lip)"/>
<clipPath id="clf"><path d="M700.8 492.0 C698.9 493.4 693.5 497.8 689.5 500.3 C685.5 502.8 680.9 503.9 676.6 506.8 C672.3 509.8 666.9 514.1 663.6 518.0 C660.3 521.9 658.3 525.5 657.0 530.0 C655.7 534.5 655.6 540.2 656.0 545.0 C656.4 549.8 657.8 553.9 659.5 559.0 C661.2 564.1 663.7 569.8 666.0 575.5 C668.3 581.2 670.5 588.1 673.5 593.5 C676.5 598.9 679.6 602.9 684.0 608.0 C688.4 613.1 694.0 620.2 699.9 624.0 C705.8 627.8 712.4 629.6 719.6 630.9 C726.8 632.2 735.1 632.4 743.3 631.9 C751.5 631.4 763.2 629.7 768.9 627.9 C774.5 626.1 775.8 622.1 777.2 621.0 L777.2 621.0 C774.5 619.3 766.9 614.4 760.9 610.9 C754.9 607.4 746.6 604.8 741.2 600.0 C735.8 595.2 733.0 588.1 728.5 581.9 C724.0 575.7 718.2 569.5 714.4 562.7 C710.6 555.9 707.7 548.9 705.5 541.0 C703.3 533.1 701.7 523.2 701.0 515.5 C700.3 507.8 701.4 498.4 701.5 495.0 Z"/></clipPath>
<g clip-path="url(#clf)">
<path d="M700.0 548.0 C701.3 551.0 705.2 560.0 708.0 566.0 C710.8 572.0 713.8 578.3 717.0 584.0 C720.2 589.7 722.8 595.0 727.0 600.0 C731.2 605.0 736.2 610.0 742.0 614.0 C747.8 618.0 758.7 622.3 762.0 624.0" fill="none" stroke="#a82900" stroke-width="6" filter="url(#bl3)"/>
<path d="M694.0 503.0 C694.2 505.8 694.5 514.2 695.0 520.0 C695.5 525.8 696.7 535.0 697.0 538.0" fill="none" stroke="#6a1a00" stroke-width="4" filter="url(#bl3)"/>
</g>
<linearGradient id="lff" x1="655" y1="0" x2="780" y2="0" gradientUnits="userSpaceOnUse"><stop offset="0" stop-color="#7a1e00"/><stop offset="0.6" stop-color="#8a2300"/><stop offset="1" stop-color="#6a1a00"/></linearGradient>
<path d="M656.5 542.7 C656.9 545.2 657.4 552.8 659.0 558.0 C660.6 563.2 662.3 566.1 665.9 574.0 C669.5 581.9 675.3 596.6 680.5 605.3 C685.7 614.0 690.9 620.3 697.2 626.2 C703.5 632.1 710.1 637.5 718.1 640.8 C726.1 644.1 735.5 645.6 745.3 646.0 C755.1 646.4 771.7 643.5 777.0 643.0 L777.2 621.0 C775.8 622.1 774.5 626.1 768.9 627.9 C763.2 629.7 751.5 631.4 743.3 631.9 C735.1 632.4 726.8 632.2 719.6 630.9 C712.4 629.6 705.8 627.8 699.9 624.0 C694.0 620.2 688.4 613.1 684.0 608.0 C679.6 602.9 676.5 598.9 673.5 593.5 C670.5 588.1 668.3 581.2 666.0 575.5 C663.7 569.8 661.2 564.1 659.5 559.0 C657.8 553.9 656.6 547.3 656.0 545.0 Z" fill="url(#lff)"/>
<path d="M700.8 492.0 C698.9 493.4 693.5 497.8 689.5 500.3 C685.5 502.8 680.9 503.9 676.6 506.8 C672.3 509.8 666.9 514.1 663.6 518.0 C660.3 521.9 658.3 525.5 657.0 530.0 C655.7 534.5 655.6 540.2 656.0 545.0 C656.4 549.8 657.8 553.9 659.5 559.0 C661.2 564.1 663.7 569.8 666.0 575.5 C668.3 581.2 670.5 588.1 673.5 593.5 C676.5 598.9 679.6 602.9 684.0 608.0 C688.4 613.1 694.0 620.2 699.9 624.0 C705.8 627.8 712.4 629.6 719.6 630.9 C726.8 632.2 735.1 632.4 743.3 631.9 C751.5 631.4 763.2 629.7 768.9 627.9 C774.5 626.1 775.8 622.1 777.2 621.0" fill="none" stroke="#1a0500" stroke-width="0.75"/>
<path d="M777.2 621 V643" fill="none" stroke="#1a0500" stroke-width="0.75"/>
<path d="M777.2 621.0 C774.5 619.3 766.9 614.4 760.9 610.9 C754.9 607.4 746.6 604.8 741.2 600.0 C735.8 595.2 733.0 588.1 728.5 581.9 C724.0 575.7 718.2 569.5 714.4 562.7 C710.6 555.9 707.7 548.9 705.5 541.0 C703.3 533.1 701.7 523.2 701.0 515.5 C700.3 507.8 701.4 498.4 701.5 495.0" fill="none" stroke="#1a0500" stroke-width="0.75"/>
<path d="M756.9 627.5 C753.5 625.0 742.4 617.8 736.6 612.5 C730.8 607.2 726.0 601.4 722.1 595.9 C718.2 590.4 716.0 584.8 713.2 579.3 C710.4 573.8 708.0 568.2 705.5 562.7 C703.0 557.2 700.1 549.6 698.0 546.0 C695.9 542.4 699.8 541.2 692.8 541.0 C685.8 540.8 662.1 544.3 656.0 545.0" fill="none" stroke="#1a0500" stroke-width="0.75"/>
<path d="M700.0 608.4 C702.0 607.5 708.3 605.1 712.0 603.0 C715.7 600.9 720.4 597.1 722.1 595.9" fill="none" stroke="#1a0500" stroke-width="0.75"/>
<path d="M735.0 629.0 C737.5 629.2 745.5 630.2 750.0 630.0 C754.5 629.8 760.0 628.3 762.0 628.0" fill="none" stroke="#f8a080" stroke-width="1.8" filter="url(#bl)"/>
<path d="M690.2 500.2 L690.2 538.5" fill="none" stroke="#1a0500" stroke-width="0.7"/>
<path d="M724.4 631 L725 642 M745 632 L745.5 645" fill="none" stroke="#1a0500" stroke-width="0.6"/>
<ellipse cx="688.6" cy="577.4" rx="10.2" ry="7.4" fill="#7a1e00" stroke="#1a0500" stroke-width="0.75"/>
<clipPath id="lh"><ellipse cx="688.6" cy="577.4" rx="10.2" ry="7.4"/></clipPath>
<ellipse cx="688.6" cy="587.5" rx="9" ry="5.5" fill="#fff" clip-path="url(#lh)"/>
<path d="M1063 590 L1134.7 530.4 L1140.2 543.6 L1147.9 559 L1148.4 577.4 L1106 607.6 L1096 609.8 L1064.1 607.6 Z" fill="#6a1a00"/>
<path d="M1063 590 L1134.7 530.4 L1140.2 543.6 L1147.9 559 L1106 593.3 Q1100 598 1093 599 L1068 596 Q1062 594 1063 590 Z" fill="#b02c00" stroke="#1a0500" stroke-width="0.75"/>
<path d="M1147.9 559 V572.3 L1106 607.6 L1096 609.8 L1064.1 607.6 L1063 590" fill="none" stroke="#1a0500" stroke-width="0.75"/>
<path d="M1106 593.3 V607.6 M1095 599.9 V609.8" fill="none" stroke="#1a0500" stroke-width="0.6"/>
<path d="M1067 592 L1136 537" fill="none" stroke="#e06030" stroke-width="2.5" filter="url(#bl)"/>
<path d="M1068 596 L1140 543 M1064 589 L1134 531" fill="none" stroke="#1a0500" stroke-width="0.6"/>
<ellipse cx="1119.0" cy="575.2" rx="7.5" ry="5.3" fill="#5a1600" stroke="#1a0500" stroke-width="0.75"/>
<radialGradient id="g1" cx="0.5" cy="0.5" r="0.5" fx="0.62" fy="0.70"><stop offset="0.000" stop-color="#4a1200"/><stop offset="0.872" stop-color="#4a1200"/><stop offset="0.923" stop-color="#9a2500"/><stop offset="1.000" stop-color="#b02c00"/></radialGradient>
<ellipse cx="931.5" cy="379.0" rx="34.5" ry="19.6" fill="url(#g1)" stroke="#1a0500" stroke-width="0.75"/>
<clipPath id="cb1"><ellipse cx="931.5" cy="379.0" rx="34.5" ry="19.6"/></clipPath>
<g clip-path="url(#cb1)">
<path d="M958.0 387.2 A32.3 19.6 0 0 1 920.5 394.4" fill="none" stroke="#e86030" stroke-width="4.0" stroke-linecap="round" opacity="0.7" filter="url(#bl3)"/>
<path d="M954.7 389.6 A32.3 19.6 0 0 1 926.6 395.4" fill="none" stroke="#ffb090" stroke-width="2.6" stroke-linecap="round" opacity="0.95" filter="url(#bl)"/>
<path d="M950.6 391.8 A32.3 19.6 0 0 1 932.9 395.6" fill="none" stroke="#ffffff" stroke-width="1.8" stroke-linecap="round" filter="url(#bl)"/>
</g>
<path d="M904.9 354.6 L901.0 373.0 A30.1 19.6 0 0 0 961.2 373.0 L955.5 354.6 A25.3 16.4 0 0 1 904.9 354.6 Z" fill="url(#cyl)"/>
<path d="M901.0 373.0 A30.1 19.6 0 0 0 961.2 373.0" fill="none" stroke="#1a0500" stroke-width="0.75"/>
<radialGradient id="g2" cx="0.5" cy="0.5" r="0.5" fx="0.60" fy="0.68"><stop offset="0.000" stop-color="#b02c00"/><stop offset="0.822" stop-color="#b02c00"/><stop offset="0.911" stop-color="#a02700"/><stop offset="1.000" stop-color="#4a1200"/></radialGradient>
<ellipse cx="930.2" cy="354.6" rx="25.3" ry="16.4" fill="url(#g2)" stroke="#1a0500" stroke-width="0.75"/>
<clipPath id="ct2"><ellipse cx="930.2" cy="354.6" rx="25.3" ry="16.4"/></clipPath>
<g clip-path="url(#ct2)">
<path d="M949.1 363.0 A23.1 15.5 0 0 1 922.3 368.7" fill="none" stroke="#e86030" stroke-width="4.0" stroke-linecap="round" opacity="0.7" filter="url(#bl3)"/>
<path d="M946.8 364.9 A23.1 15.5 0 0 1 926.7 369.5" fill="none" stroke="#ffb090" stroke-width="2.6" stroke-linecap="round" opacity="0.95" filter="url(#bl)"/>
<path d="M943.8 366.6 A23.1 15.5 0 0 1 931.2 369.6" fill="none" stroke="#ffffff" stroke-width="1.8" stroke-linecap="round" filter="url(#bl)"/>
</g>
<ellipse cx="930.0" cy="353.9" rx="20.8" ry="14.7" fill="#b02c00" stroke="#1a0500" stroke-width="0.75"/>
<radialGradient id="g3" cx="0.5" cy="0.5" r="0.5" fx="0.62" fy="0.70"><stop offset="0.000" stop-color="#4a1200"/><stop offset="0.816" stop-color="#4a1200"/><stop offset="0.889" stop-color="#9a2500"/><stop offset="1.000" stop-color="#b02c00"/></radialGradient>
<ellipse cx="1063.9" cy="438.0" rx="71.6" ry="42.6" fill="url(#g3)" stroke="#1a0500" stroke-width="0.75"/>
<clipPath id="cb3"><ellipse cx="1063.9" cy="438.0" rx="71.6" ry="42.6"/></clipPath>
<g clip-path="url(#cb3)">
<path d="M1120.2 452.9 A65.0 40.8 0 0 1 1036.4 469.4" fill="none" stroke="#e86030" stroke-width="5.0" stroke-linecap="round" opacity="0.7" filter="url(#bl3)"/>
<path d="M1113.5 458.8 A65.0 40.8 0 0 1 1050.1 472.3" fill="none" stroke="#ffb090" stroke-width="3.2" stroke-linecap="round" opacity="0.95" filter="url(#bl)"/>
<path d="M1104.6 464.3 A65.0 40.8 0 0 1 1064.5 473.2" fill="none" stroke="#ffffff" stroke-width="2.2" stroke-linecap="round" filter="url(#bl)"/>
</g>
<path d="M1004.4 411.7 L1004.4 425.1 A58.4 38.9 0 0 0 1121.2 425.1 L1121.2 411.7 A58.4 38.9 0 0 1 1004.4 411.7 Z" fill="url(#cyl)"/>
<path d="M1004.4 425.1 A58.4 38.9 0 0 0 1121.2 425.1" fill="none" stroke="#1a0500" stroke-width="0.75"/>
<radialGradient id="g4" cx="0.5" cy="0.5" r="0.5" fx="0.60" fy="0.68"><stop offset="0.000" stop-color="#b02c00"/><stop offset="0.800" stop-color="#b02c00"/><stop offset="0.900" stop-color="#a02700"/><stop offset="1.000" stop-color="#4a1200"/></radialGradient>
<ellipse cx="1062.8" cy="411.7" rx="58.4" ry="38.9" fill="url(#g4)" stroke="#1a0500" stroke-width="0.75"/>
<clipPath id="ct4"><ellipse cx="1062.8" cy="411.7" rx="58.4" ry="38.9"/></clipPath>
<g clip-path="url(#ct4)">
<path d="M1108.3 429.3 A52.5 36.2 0 0 1 1040.6 444.0" fill="none" stroke="#e86030" stroke-width="5.0" stroke-linecap="round" opacity="0.7" filter="url(#bl3)"/>
<path d="M1102.9 434.6 A52.5 36.2 0 0 1 1051.7 446.6" fill="none" stroke="#ffb090" stroke-width="3.2" stroke-linecap="round" opacity="0.95" filter="url(#bl)"/>
<path d="M1095.7 439.4 A52.5 36.2 0 0 1 1063.3 447.4" fill="none" stroke="#ffffff" stroke-width="2.2" stroke-linecap="round" filter="url(#bl)"/>
</g>
<ellipse cx="1062.4" cy="407.9" rx="46.7" ry="33.5" fill="#b02c00" stroke="#1a0500" stroke-width="0.75"/>
<ellipse cx="1062.2" cy="408.1" rx="19.9" ry="14.6" fill="url(#hw)" stroke="#1a0500" stroke-width="0.75"/>
<clipPath id="c1062"><ellipse cx="1062.2" cy="408.1" rx="19.9" ry="14.6"/></clipPath>
<ellipse cx="1062.2" cy="416.6" rx="19.9" ry="14.6" fill="#fff" clip-path="url(#c1062)"/>
<radialGradient id="g5" cx="0.5" cy="0.5" r="0.5" fx="0.62" fy="0.70"><stop offset="0.000" stop-color="#4a1200"/><stop offset="0.877" stop-color="#4a1200"/><stop offset="0.926" stop-color="#9a2500"/><stop offset="1.000" stop-color="#b02c00"/></radialGradient>
<ellipse cx="898.9" cy="473.8" rx="102.0" ry="76.0" fill="url(#g5)" stroke="#1a0500" stroke-width="0.75"/>
<clipPath id="cb5"><ellipse cx="898.9" cy="473.8" rx="102.0" ry="76.0"/></clipPath>
<g clip-path="url(#cb5)">
<path d="M985.7 504.0 A95.8 69.3 0 0 1 863.0 539.0" fill="none" stroke="#e86030" stroke-width="6.0" stroke-linecap="round" opacity="0.7" filter="url(#bl3)"/>
<path d="M976.9 514.9 A95.8 69.3 0 0 1 884.0 543.2" fill="none" stroke="#ffb090" stroke-width="3.8" stroke-linecap="round" opacity="0.95" filter="url(#bl)"/>
<path d="M964.5 525.2 A95.8 69.3 0 0 1 905.7 543.9" fill="none" stroke="#ffffff" stroke-width="2.6" stroke-linecap="round" filter="url(#bl)"/>
</g>
<path d="M808.4 461.3 L808.4 469.0 A89.5 62.7 0 0 0 987.4 469.0 L987.4 461.3 A89.5 62.7 0 0 1 808.4 461.3 Z" fill="url(#cyl)"/>
<path d="M808.4 469.0 A89.5 62.7 0 0 0 987.4 469.0" fill="none" stroke="#1a0500" stroke-width="0.75"/>
<radialGradient id="g6" cx="0.5" cy="0.5" r="0.5" fx="0.60" fy="0.68"><stop offset="0.000" stop-color="#b02c00"/><stop offset="0.860" stop-color="#b02c00"/><stop offset="0.930" stop-color="#a02700"/><stop offset="1.000" stop-color="#4a1200"/></radialGradient>
<ellipse cx="897.9" cy="461.3" rx="89.5" ry="62.7" fill="url(#g6)" stroke="#1a0500" stroke-width="0.75"/>
<clipPath id="ct6"><ellipse cx="897.9" cy="461.3" rx="89.5" ry="62.7"/></clipPath>
<g clip-path="url(#ct6)">
<path d="M973.4 485.6 A83.2 58.7 0 0 1 866.7 515.2" fill="none" stroke="#e86030" stroke-width="6.0" stroke-linecap="round" opacity="0.7" filter="url(#bl3)"/>
<path d="M965.7 494.8 A83.2 58.7 0 0 1 884.9 518.8" fill="none" stroke="#ffb090" stroke-width="3.8" stroke-linecap="round" opacity="0.95" filter="url(#bl)"/>
<path d="M954.9 503.6 A83.2 58.7 0 0 1 903.9 519.3" fill="none" stroke="#ffffff" stroke-width="2.6" stroke-linecap="round" filter="url(#bl)"/>
</g>
<ellipse cx="897.0" cy="456.3" rx="77.0" ry="54.7" fill="#b02c00" stroke="#1a0500" stroke-width="0.75"/>
<ellipse cx="897.1" cy="456.4" rx="39.9" ry="28.4" fill="url(#hw)" stroke="#1a0500" stroke-width="0.75"/>
<clipPath id="c897"><ellipse cx="897.1" cy="456.4" rx="39.9" ry="28.4"/></clipPath>
<ellipse cx="897.1" cy="465.4" rx="39.9" ry="28.4" fill="#fff" clip-path="url(#c897)"/>
<radialGradient id="g7" cx="0.5" cy="0.5" r="0.5" fx="0.62" fy="0.70"><stop offset="0.000" stop-color="#4a1200"/><stop offset="0.869" stop-color="#4a1200"/><stop offset="0.921" stop-color="#9a2500"/><stop offset="1.000" stop-color="#b02c00"/></radialGradient>
<ellipse cx="1016.1" cy="540.5" rx="34.3" ry="20.4" fill="url(#g7)" stroke="#1a0500" stroke-width="0.75"/>
<clipPath id="cb7"><ellipse cx="1016.1" cy="540.5" rx="34.3" ry="20.4"/></clipPath>
<g clip-path="url(#cb7)">
<path d="M1042.4 549.2 A32.0 19.9 0 0 1 1005.1 556.5" fill="none" stroke="#e86030" stroke-width="4.0" stroke-linecap="round" opacity="0.7" filter="url(#bl3)"/>
<path d="M1039.2 551.6 A32.0 19.9 0 0 1 1011.2 557.5" fill="none" stroke="#ffb090" stroke-width="2.6" stroke-linecap="round" opacity="0.95" filter="url(#bl)"/>
<path d="M1035.1 553.9 A32.0 19.9 0 0 1 1017.5 557.7" fill="none" stroke="#ffffff" stroke-width="1.8" stroke-linecap="round" filter="url(#bl)"/>
</g>
<path d="M989.3 517.7 L986.3 534.6 A29.8 19.5 0 0 0 1045.9 534.6 L1041.3 517.7 A26.0 17.4 0 0 1 989.3 517.7 Z" fill="url(#cyl)"/>
<path d="M986.3 534.6 A29.8 19.5 0 0 0 1045.9 534.6" fill="none" stroke="#1a0500" stroke-width="0.75"/>
<radialGradient id="g8" cx="0.5" cy="0.5" r="0.5" fx="0.60" fy="0.68"><stop offset="0.000" stop-color="#b02c00"/><stop offset="0.827" stop-color="#b02c00"/><stop offset="0.913" stop-color="#a02700"/><stop offset="1.000" stop-color="#4a1200"/></radialGradient>
<ellipse cx="1015.3" cy="517.7" rx="26.0" ry="17.4" fill="url(#g8)" stroke="#1a0500" stroke-width="0.75"/>
<clipPath id="ct8"><ellipse cx="1015.3" cy="517.7" rx="26.0" ry="17.4"/></clipPath>
<g clip-path="url(#ct8)">
<path d="M1034.8 526.3 A23.8 15.8 0 0 1 1007.2 532.1" fill="none" stroke="#e86030" stroke-width="4.0" stroke-linecap="round" opacity="0.7" filter="url(#bl3)"/>
<path d="M1032.4 528.2 A23.8 15.8 0 0 1 1011.7 532.9" fill="none" stroke="#ffb090" stroke-width="2.6" stroke-linecap="round" opacity="0.95" filter="url(#bl)"/>
<path d="M1029.3 530.0 A23.8 15.8 0 0 1 1016.3 533.0" fill="none" stroke="#ffffff" stroke-width="1.8" stroke-linecap="round" filter="url(#bl)"/>
</g>
<ellipse cx="1015.3" cy="515.7" rx="21.5" ry="14.3" fill="#b02c00" stroke="#1a0500" stroke-width="0.75"/>
</svg>
<!-- status bar -->
<div class="a" style="left:4px;top:831px;width:1321px;height:23px;background:#f0f0f0"></div>
<div class="a" style="left:0;top:861px;width:1332px;height:1px;background:#8e9c5c"></div>
<div class="a" style="left:0;top:854px;width:1332px;height:1px;background:#aab86c"></div>
<div class="a" style="left:608px;top:833px;width:1px;height:19px;background:#d3d3d3"></div>
<div class="a" style="left:1104px;top:833px;width:1px;height:19px;background:#d3d3d3"></div>
<div class="a" style="left:1184px;top:833px;width:1px;height:19px;background:#d3d3d3"></div>
<div class="a" style="left:1254px;top:833px;width:1px;height:19px;background:#d3d3d3"></div>
<div class="tr" style="left:9px;top:836px;transform:scaleX(0.945);transform-origin:0 0">Valmiina (Opaste: paina F1)</div>
<div class="tr" style="left:1119px;top:837px;transform:scaleX(0.975);transform-origin:0 0">dx 114.80</div>
<div class="tr" style="left:1189px;top:837px">dy 70.66</div>
<div class="a" style="left:1259px;top:837px;width:49px;height:14px;overflow:hidden"><div class="tr" style="left:0;top:0">dz -126.84</div></div>

<div id="overlay"><svg style="left:0;top:0" width="1332" height="140" viewBox="0 0 1332 140">

<rect x="493.5" y="96.5" width="607" height="31" fill="#f6f6f6" stroke="#c8c8c8" stroke-width="1"/>
<rect x="589" y="97" width="96" height="30" fill="#ffe4aa"/>
<!-- pin -->
<g fill="#4e4e4e">
<path d="M498 120.8 L505.5 113.2 L506.6 114.3 Z"/>
<path d="M501.2 110.6 L505 109.6 L511.2 103.4 L511.8 102.2 L517.2 107.4 L516 108 L509.6 114.4 L508.8 118.4 Z"/>
</g>
<!-- transfer -->
<rect x="528.5" y="102.5" width="15" height="2" fill="#80f050" stroke="#a8a0b0" stroke-width="1"/>
<rect x="545.5" y="106.5" width="2" height="15" fill="#80f050" stroke="#a8a0b0" stroke-width="1"/>
<path d="M532.2 108 V113.5 Q532.2 117.5 536.5 117.5 H542" fill="none" stroke="#707070" stroke-width="1.1"/>
<path d="M529.8 110.2 L532.2 107 L534.6 110.2 M540 115 L543 117.5 L540 120" fill="none" stroke="#707070" stroke-width="1.1"/>
<!-- ruler -->
<rect x="560.7" y="106.6" width="24.8" height="10.8" fill="#fff89a" stroke="#a07a20" stroke-width="1"/>
<path d="M563.5 107 V109.5 M566.5 107 V111 M569.5 107 V109.5 M572.5 107 V111 M575.5 107 V109.5 M578.5 107 V111 M581.5 107 V109.5 M584 107 V110.5" stroke="#806020" stroke-width="0.7"/>
<!-- point select -->
<circle cx="602.6" cy="105.4" r="3" fill="none" stroke="#000" stroke-width="1"/>
<circle cx="602.6" cy="105.4" r="1" fill="#000"/>
<g transform="translate(607.3,108.2)"><path d="M0 0 V11 L2.6 8.6 L4.4 12.4 L6 11.7 L4.4 8 H7.8 Z" fill="#fff" stroke="#707070" stroke-width="0.9" stroke-linejoin="round"/></g>
<!-- line select -->
<path d="M631.7 111 L639.7 104" stroke="#000" stroke-width="2.4"/>
<path d="M632.1 110.6 L639.3 104.4" stroke="#fff" stroke-width="0.9"/>
<g transform="translate(639.2,108.2)"><path d="M0 0 V11 L2.6 8.6 L4.4 12.4 L6 11.7 L4.4 8 H7.8 Z" fill="#fff" stroke="#707070" stroke-width="0.9" stroke-linejoin="round"/></g>
<!-- face select -->
<path d="M661.5 107.3 L664.7 102.7 H672.7 L669.5 107.3 Z" fill="#fff" stroke="#000" stroke-width="1"/>
<g transform="translate(671.1,108.2)"><path d="M0 0 V11 L2.6 8.6 L4.4 12.4 L6 11.7 L4.4 8 H7.8 Z" fill="#fff" stroke="#707070" stroke-width="0.9" stroke-linejoin="round"/></g>
<!-- C select -->
<path d="M699.8 102.8 H693.6 V109.8 H699.8 V107.8 H695.6 V104.8 H699.8 Z" fill="#fff" stroke="#000" stroke-width="1.2"/>
<g transform="translate(703,108.2)"><path d="M0 0 V11 L2.6 8.6 L4.4 12.4 L6 11.7 L4.4 8 H7.8 Z" fill="#fff" stroke="#707070" stroke-width="0.9" stroke-linejoin="round"/></g>
<!-- cubes -->
<g transform="translate(723,102)"><rect x="0.5" y="4.5" width="15" height="15" fill="#88f848"/><path d="M0.5 4.5 H15.5 V19.5 H0.5 Z M4.5 0.5 H19.5 V15.5 H4.5 Z M0.5 4.5 L4.5 0.5 M15.5 4.5 L19.5 0.5 M15.5 19.5 L19.5 15.5 M0.5 19.5 L4.5 15.5" fill="none" stroke="#a8a8a8" stroke-width="1"/></g>
<g transform="translate(755,102)"><path d="M0.5 4.5 L4.5 0.5 H19.5 L15.5 4.5 Z" fill="#88f848"/><path d="M0.5 4.5 H15.5 V19.5 H0.5 Z M4.5 0.5 H19.5 V15.5 H4.5 Z M0.5 4.5 L4.5 0.5 M15.5 4.5 L19.5 0.5 M15.5 19.5 L19.5 15.5 M0.5 19.5 L4.5 15.5" fill="none" stroke="#a8a8a8" stroke-width="1"/></g>
<g transform="translate(787,102)"><path d="M0.5 4.5 L4.5 0.5 V15.5 L0.5 19.5 Z" fill="#88f848"/><path d="M0.5 4.5 H15.5 V19.5 H0.5 Z M4.5 0.5 H19.5 V15.5 H4.5 Z M0.5 4.5 L4.5 0.5 M15.5 4.5 L19.5 0.5 M15.5 19.5 L19.5 15.5 M0.5 19.5 L4.5 15.5" fill="none" stroke="#a8a8a8" stroke-width="1"/></g>
<g transform="translate(819,102)"><path d="M15.5 4.5 L19.5 0.5 V15.5 L15.5 19.5 Z" fill="#88f848"/><path d="M0.5 4.5 H15.5 V19.5 H0.5 Z M4.5 0.5 H19.5 V15.5 H4.5 Z M0.5 4.5 L4.5 0.5 M15.5 4.5 L19.5 0.5 M15.5 19.5 L19.5 15.5 M0.5 19.5 L4.5 15.5" fill="none" stroke="#a8a8a8" stroke-width="1"/></g>
<path d="M851.6 105.9 L857.7 101.2 L870.8 105.4 L865.7 110 Z" fill="#eefbe6" stroke="#a8a8a8" stroke-width="1"/>
<path d="M851.6 105.9 L865.7 110 V122.3 L851.6 117.6 Z" fill="#eefbe6" stroke="#a8a8a8" stroke-width="1"/>
<path d="M865.7 110 L870.8 105.4 V118.5 L865.7 122.3 Z" fill="#c8f5c0" stroke="#a8a8a8" stroke-width="1"/>
<g transform="translate(883,102)"><rect x="0.5" y="4.5" width="15" height="15" fill="#88f848"/><path d="M0.5 4.5 H15.5 V19.5 H0.5 Z M4.5 0.5 H19.5 V15.5 H4.5 Z M0.5 4.5 L4.5 0.5 M15.5 4.5 L19.5 0.5 M15.5 19.5 L19.5 15.5 M0.5 19.5 L4.5 15.5" fill="none" stroke="#a8a8a8" stroke-width="1"/></g>
<path d="M888 107.5 V119 L890.6 116.6 L892.4 120.4 L894 119.7 L892.4 116 H895.8 Z" fill="#fff" stroke="#202020" stroke-width="0.9" stroke-linejoin="round"/>
<!-- list -->
<path d="M915.9 100.2 H922.9 L919.4 103.5 Z" fill="#808080"/>
<rect x="915.5" y="105.5" width="19" height="15.8" fill="#fff" stroke="#a0a0a0" stroke-width="1"/>
<path d="M918 108.5 H932 M918 110.5 H932 M918 112.5 H932 M918 114.5 H932 M918 116.5 H932 M918 118.5 H932" stroke="#909090" stroke-width="0.8"/>
<!-- L block -->
<path d="M948.4 106.6 L951.8 103.2 H958.6 V111.2 H966.4 V118 L963.2 121.2 H948.4 Z" fill="#fff" stroke="#1a6a8a" stroke-width="1.1"/>
<path d="M948.4 106.6 H955.4 V121.2 H948.4 Z" fill="#a8dcf0"/>
<path d="M955.4 106.6 L958.6 103.2 V111.2 L955.4 114.4 Z" fill="#3a8ab0"/>
<path d="M948.4 106.6 L951.8 103.2 H958.6 V111.2 H966.4 V118 L963.2 121.2 H948.4 Z M948.4 106.6 H955.4 L958.6 103.2 M955.4 106.6 V114.4 H963.2 L966.4 111.2 M963.2 114.4 V121.2 M955.4 114.4 L948.4 121.2" fill="none" stroke="#1a6a8a" stroke-width="1.1"/>
<!-- plane -->
<path d="M979 115.6 L985 112.6 V101.2 L995.6 105.7 V114.6" fill="none" stroke="#808080" stroke-width="1"/>
<path d="M981.5 122.6 L985.8 119.6 H1001 L996.5 122.6 Z" fill="#d0d0ff" stroke="#707070" stroke-width="0.8"/>
<!-- yellow box -->
<path d="M1011.5 107.5 L1014.5 104.5 H1031.5 V118.5 M1011.5 107.5 H1028.5 V114 M1028.5 107.5 L1031.5 104.5 M1011.5 107.5 V114.5" fill="none" stroke="#c8c8c8" stroke-width="1"/>
<path d="M1011.5 114.5 L1014.5 112 H1031.5 V118.5 L1028.5 121.5 H1011.5 Z" fill="#ffe030" stroke="#c8a020" stroke-width="1"/>
<path d="M1011.5 114.5 H1028.5 V121.5 M1028.5 114.5 L1031.5 112" fill="none" stroke="#c8a020" stroke-width="1"/>
<!-- yellow box X -->
<path d="M1043.5 107.5 L1046.5 104.5 H1063.5 V118.5 M1043.5 107.5 H1060.5 V114 M1060.5 107.5 L1063.5 104.5 M1043.5 107.5 V114.5" fill="none" stroke="#c8c8c8" stroke-width="1"/>
<path d="M1043.5 115.5 L1046.5 112.3 H1063.5 V118.5 L1060.5 121.5 H1043.5 Z" fill="#ffe030" stroke="#c8a020" stroke-width="1"/>
<path d="M1043.5 115.5 L1046.5 112.3 H1063.5 L1060.5 115.5 Z" fill="#eceef8" stroke="#c8a020" stroke-width="1"/>
<path d="M1060.5 115.5 V121.5" stroke="#c8a020" stroke-width="1"/>
<path d="M1047.8 102 L1059.2 110.2 M1059.2 102 L1047.8 110.2" stroke="#dd2020" stroke-width="2.6"/>
<!-- expand -->
<rect x="1074.6" y="108.8" width="14.8" height="11.8" fill="#fff" stroke="#78b4dc" stroke-width="1"/>
<path d="M1074.2 108.8 H1089.5" stroke="#2a88cc" stroke-width="1.4"/>
<path d="M1082.2 111.3 L1086 107.5 L1083.6 105.1 L1086.2 102.5 H1095.6 V111.9 L1093 114.5 L1090.6 112.1 L1086.8 115.9 Z" fill="#fff" stroke="#2a88cc" stroke-width="1"/>
<!-- window buttons -->
<rect x="1228.5" y="93.5" width="30" height="19" fill="#f4f4f4" stroke="#dcdcdc" stroke-width="1"/>
<rect x="1260.5" y="93.5" width="30" height="19" fill="#f4f4f4" stroke="#dcdcdc" stroke-width="1"/>
<rect x="1292.5" y="93.5" width="30.5" height="19" fill="#f4f4f4" stroke="#dcdcdc" stroke-width="1"/>
<rect x="1239" y="105.5" width="11" height="2.4" fill="#555"/>
<path d="M1270.5 99.5 H1280.5 V107.5 H1270.5 Z M1273.5 99.5 V96.8 H1283.2 V104.8 H1280.5" fill="none" stroke="#555" stroke-width="1.1"/>
<rect x="1298" y="95" width="20" height="15" fill="#c75050"/>
<path d="M1304.2 98.5 L1311.8 106.5 M1311.8 98.5 L1304.2 106.5" stroke="#fff" stroke-width="1.4"/>
</svg>
<svg style="left:0;top:0" width="370" height="862" viewBox="0 0 370 862">
<!-- row1 assembly icon -->
<rect x="12.6" y="120.6" width="13" height="12.8" rx="1.5" fill="#8fb08a" stroke="#000" stroke-width="1.2"/>
<path d="M14.2 121.9 H23.6" stroke="#d8e8d0" stroke-width="1"/>
<path d="M24.3 122.2 V132.8" stroke="#000" stroke-width="0.9"/>
<path d="M21.6 122.5 V133 M21.6 125.6 H15.6 V129.6 H21.6" fill="none" stroke="#000" stroke-width="1.5"/>
<!-- expanders -->
<path d="M18.6 142.6 L22.6 146.5 L18.6 150.4 Z" fill="#fff" stroke="#a6a6a6" stroke-width="1"/>
<path d="M18.6 178.6 L22.6 182.5 L18.6 186.4 Z" fill="#fff" stroke="#a6a6a6" stroke-width="1"/>
<!-- sun -->
<g fill="#ff8a3a">
<path d="M38.4 137.4 L39.8 140.5 H37 Z M38.4 151 L39.8 147.9 H37 Z M31.6 144.2 L34.7 142.8 V145.6 Z M45.2 144.2 L42.1 142.8 V145.6 Z"/>
<path d="M33.6 139.4 L36.8 140.6 L34.8 142.6 Z M43.2 139.4 L40 140.6 L42 142.6 Z M33.6 149 L36.8 147.8 L34.8 145.8 Z M43.2 149 L40 147.8 L42 145.8 Z"/>
</g>
<circle cx="38.4" cy="144.2" r="3.8" fill="#ffe000"/>
<!-- drawings -->
<path d="M35.5 158 H41.6 L43.6 160 V165.2 H35.5 Z" fill="#fff" stroke="#000" stroke-width="1.3"/>
<path d="M33 160.5 V167.2 H41" fill="none" stroke="#000" stroke-width="1.3"/>
<!-- ilmiasut -->
<path d="M33.4 174 V187.6 M33.4 176.3 H38.5 M33.4 180.9 H38.5 M33.4 185.6 H38.5" stroke="#a0a0a0" stroke-width="1"/>
<rect x="38.5" y="174.6" width="3.2" height="3.2" fill="#ffd800" stroke="#000" stroke-width="1"/>
<rect x="38.5" y="179.3" width="3.2" height="3.2" fill="#fff" stroke="#000" stroke-width="1"/>
<rect x="38.5" y="184" width="3.2" height="3.2" fill="#fff" stroke="#000" stroke-width="1"/>
<!-- VX3002239 icon -->
<path d="M31.5 199 V204.5 H42.5 L43.5 203 L42 199.5 H36 V198 Z" fill="#8fb08a" stroke="#000" stroke-width="1.2"/>
<rect x="38.5" y="191.3" width="7.5" height="8.6" fill="#fff" stroke="#000" stroke-width="1.1"/>
<path d="M41 193 V197.5 H43.5" fill="none" stroke="#000" stroke-width="1"/>
<rect x="30.5" y="194.5" width="5.5" height="4.3" fill="#00d8e0" stroke="#000" stroke-width="1"/>
<path d="M31.8 194.5 V193 Q33.2 191 34.6 193 V194.5" fill="none" stroke="#000" stroke-width="1"/>
<!-- Machinings icon -->
<path d="M31.5 217 V223.4 H43.8 V220.5 H37 V216 H43.8 V211 H36 V217 Z" fill="#ff1010" stroke="#000" stroke-width="1.1"/>
<path d="M37.2 212 H43.5 M37.5 219.5 H43.5" stroke="#ffe880" stroke-width="0.8"/>
<rect x="30.5" y="212.5" width="5.5" height="4.3" fill="#00d8e0" stroke="#000" stroke-width="1"/>
<path d="M31.8 212.5 V211 Q33.2 209 34.6 211 V212.5" fill="none" stroke="#000" stroke-width="1"/>
<!-- splitter grip -->
<path d="M183 676 H190 L186.5 680 Z" fill="#60aee0"/>
<!-- tab icons -->
<rect x="16.5" y="815.8" width="13" height="12.5" rx="1.5" fill="#f6e07a" stroke="#909090" stroke-width="1"/>
<path d="M27 817 V827.5" stroke="#8a8a70" stroke-width="0.9"/>
<path d="M24.5 817 V828 M24.5 820.5 H19 V824.5 H24.5" fill="none" stroke="#7a7a60" stroke-width="1.3"/>
<rect x="111.5" y="814.5" width="13" height="12" fill="#fff" stroke="#000" stroke-width="1"/>
<path d="M115.6 819.6 H118.4 V824.8 M115.4 825 H121.2" fill="none" stroke="#000" stroke-width="1.5"/>
<rect x="117.2" y="815.6" width="2" height="2" fill="#000"/>
</svg>
<svg style="left:0;top:0" width="1332" height="862" viewBox="0 0 1332 862">
<path d="M416.5 783.5 L405.5 762" stroke="#e88080" stroke-width="1.3"/>
<path d="M403.3 756.5 L402.3 764.2 L408 761.6 Z" fill="#e88080"/>
<path d="M416.5 783.5 L415.3 762" stroke="#33cc33" stroke-width="1.3"/>
<path d="M415.2 755.8 L412.3 763 H418 Z" fill="#33cc33"/>
<path d="M416.5 783.5 L449 774.2" stroke="#3333dd" stroke-width="1.3"/>
<path d="M455 772.3 L447.2 771.2 L449.2 777 Z" fill="#3333dd"/>
<text x="400" y="756.5" text-anchor="middle" font-family="Liberation Sans" font-size="12" fill="#ee8888">X</text>
<text x="414.8" y="754.3" text-anchor="middle" font-family="Liberation Sans" font-size="12" fill="#88dd88">Y</text>
<text x="461.7" y="776" text-anchor="middle" font-family="Liberation Sans" font-size="12" fill="#7777ee">Z</text>
</svg></div>
<svg style="left:0;top:0" width="1332" height="862"><g fill="#b4b4b4">
<rect x="1321" y="844" width="2" height="2"/><rect x="1318" y="847" width="2" height="2"/><rect x="1321" y="847" width="2" height="2"/><rect x="1315" y="850" width="2" height="2"/><rect x="1318" y="850" width="2" height="2"/><rect x="1321" y="850" width="2" height="2"/></g></svg>
</body></html>
